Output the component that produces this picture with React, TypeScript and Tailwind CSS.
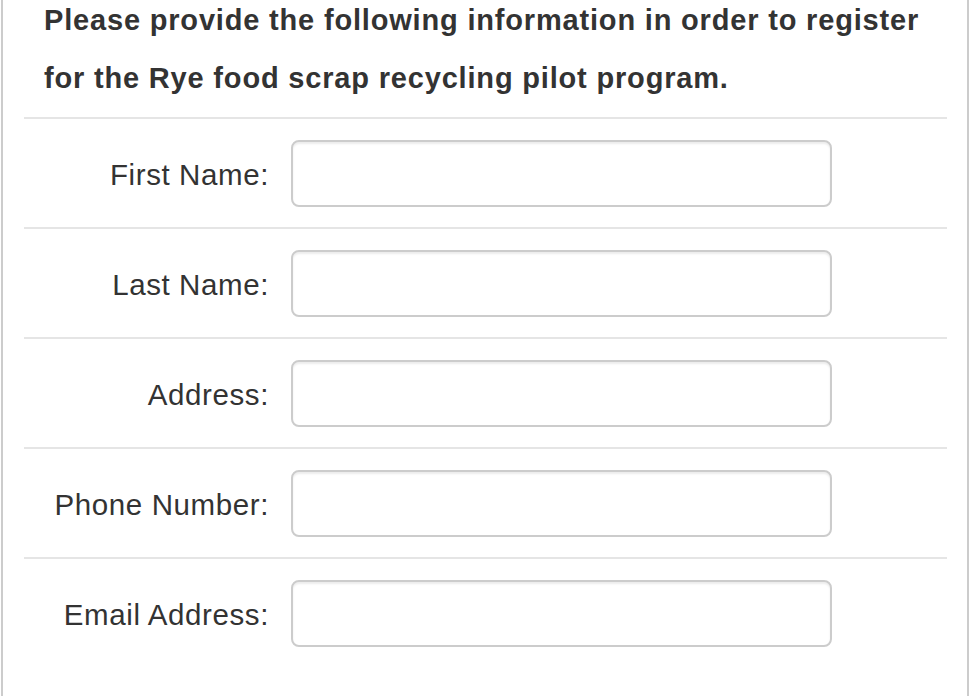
import React from "react";

const fields = ["First Name:", "Last Name:", "Address:", "Phone Number:", "Email Address:"];

export default function App() {
  return (
    <div
      className="w-[970px] h-[696px] overflow-hidden bg-white"
      style={{ fontFamily: '"Liberation Sans", Arial, sans-serif' }}
    >
      <div className="flow-root ml-[1px] mr-[1px] h-[696px] border-x-2 border-[#cccccc] pl-[21px] pr-[20px]">
        <div className="mt-[-9px] pl-[20px] text-[29px] font-bold leading-[58px] tracking-[0.82px] text-[#333333]">
          Please provide the following information in order to register for the Rye food scrap recycling pilot program.
        </div>
        <div className="mt-[10px]">
          {fields.map((f) => (
            <div key={f} className="border-t-2 border-[#e5e5e5] pt-[21px] pb-[20px] flex items-center">
              <label className="w-[245px] shrink-0 pt-[3px] text-right text-[29.5px] text-[#333333] tracking-[0.6px]">{f}</label>
              <input
                type="text"
                className="ml-[22px] w-[541px] h-[67px] rounded-[8px] border-2 border-[#cccccc] bg-white shadow-[inset_0_2px_2px_rgba(0,0,0,0.075)] outline-none"
              />
            </div>
          ))}
        </div>
      </div>
    </div>
  );
}
